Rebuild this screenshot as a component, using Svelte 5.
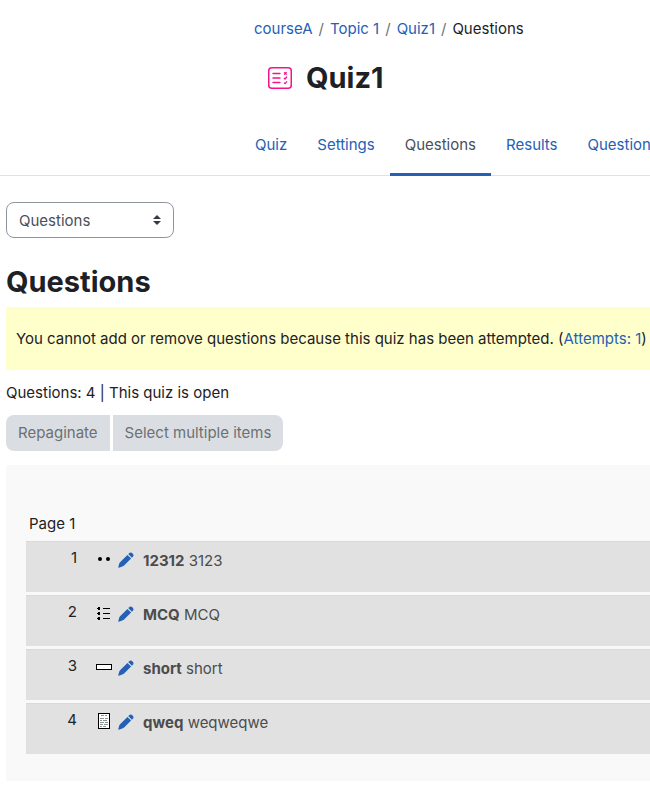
<script>
  const crumbs = ["courseA", "Topic 1", "Quiz1"];
  const tabs = ["Quiz", "Settings", "Questions", "Results", "Question bank"];
  const questions = [
    { type: "match", name: "12312", text: "3123" },
    { type: "multichoice", name: "MCQ", text: "MCQ" },
    { type: "shortanswer", name: "short", text: "short" },
    { type: "essay", name: "qweq", text: "weqweqwe" },
  ];

  let activeTab = $state("Questions");
  let view = $state("Questions");
</script>

<div class="page">
  <header class="header">
    <nav class="breadcrumb" aria-label="Breadcrumb">
      {#each crumbs as crumb}
        <a href="#top">{crumb}</a>
        <span class="breadcrumb__sep">/</span>
      {/each}
      <span>Questions</span>
    </nav>
    <div class="title">
      <svg class="title__icon" viewBox="0 0 24 24" fill="none" stroke="#f7118f" aria-hidden="true">
        <rect x="0.75" y="1.75" width="22.5" height="20.5" rx="3" stroke-width="1.5" />
        <path d="M5 7.5h7M5 12h7M5 16.5h7" stroke-width="1.4" stroke-linecap="round" />
        <path d="M16.2 6.2l2.4 2.4m0-2.4l-2.4 2.4M16 12l1 1 2-2.2M16 16.6l1 1 2-2.2" stroke-width="1.3" />
      </svg>
      <h1>Quiz1</h1>
    </div>
  </header>

  <nav class="tabs">
    {#each tabs as tab}
      <a
        href="#top"
        class="tabs__item"
        class:tabs__item--active={activeTab === tab}
        onclick={() => activeTab = tab}
      >{tab}</a>
    {/each}
  </nav>

  <main class="content">
    <select class="view-select" aria-label="Question bank navigation" bind:value={view}>
      <option>Questions</option>
      <option>Categories</option>
      <option>Import</option>
      <option>Export</option>
    </select>

    <h2>Questions</h2>
    <div class="notice">
      You cannot add or remove questions because this quiz has been attempted. (<a href="#top">Attempts: 1</a>)
    </div>
    <div class="status">Questions: {questions.length} | This quiz is open</div>

    <div class="actions">
      <button disabled>Repaginate</button>
      <button disabled>Select multiple items</button>
    </div>

    <section class="slots">
      <h3>Page 1</h3>
      <ol>
        {#each questions as q, i}
          <li class="slot">
            <span class="slot__number">{i + 1}</span>
            <svg class="slot__type" viewBox="0 0 16 16" aria-hidden="true">
              {#if q.type === "match"}
                <circle cx="4" cy="8" r="2" />
                <circle cx="12" cy="8" r="2" />
              {:else if q.type === "multichoice"}
                <path d="M2 2h2v3H2zM1 3h1v1H1zM2 7h2v3H2zM1 8h1v1H1zM2 12h2v3H2zM1 13h1v1H1zM7 3h7v1H7zM7 8h7v1H7zM7 13h7v1H7z" />
              {:else if q.type === "shortanswer"}
                <rect x="0.5" y="5.5" width="15" height="5" fill="#fff" stroke="#000" />
              {:else}
                <rect x="2.5" y="0.5" width="11" height="15" fill="#fff" stroke="#000" />
                <path
                  d="M5 2.5h3m1 0h2M4 5.5h4m1 0h3M4 7.5h2m1 0h4M4 9.5h4m1 0h3M4 11.5h3m1 0h4M4 13.5h2m1 0h3"
                  stroke="#899390"
                />
              {/if}
            </svg>
            <a href="#top" class="slot__link">
              <svg class="slot__edit" viewBox="0 0 16 16" fill="#2560b5" aria-hidden="true">
                <path d="M10.9 1.4a2.6 2.6 0 0 1 3.7 3.7l-.7.7-3.7-3.7z" />
                <path d="M9.4 2.9l3.7 3.7-7 7c-.5.5-1.1.8-1.8 1L.9 15.7c-.4.1-.7-.2-.6-.6l.9-3.3c.2-.7.6-1.4 1.1-1.9z" />
              </svg>
              <span><strong>{q.name}</strong> {q.text}</span>
            </a>
          </li>
        {/each}
      </ol>
    </section>
  </main>
</div>

<style>
  :global(body) {
    margin: 0;
    background: #fff;
  }
  .page {
    overflow: hidden;
    padding-bottom: 20px;
    color: #1d2125;
    font: 15px/24px Inter, "Liberation Sans", sans-serif;
  }
  a { color: #2560b5; text-decoration: none; }
  h1, h2, h3 { margin: 0; }

  .header { padding: 17px 0 0 254px; }
  .breadcrumb { display: flex; gap: 6px; white-space: nowrap; }
  .breadcrumb__sep { color: #6a737b; }
  .title { display: flex; align-items: center; gap: 14px; padding: 19px 0 0 14px; }
  .title__icon { width: 24px; height: 24px; }
  h1 { font-size: 29px; line-height: 36px; font-weight: 700; }

  .tabs {
    display: flex;
    height: 62px;
    margin-top: 17px;
    padding-left: 240px;
    border-bottom: 1px solid #dee2e6;
  }
  .tabs__item {
    box-sizing: border-box;
    height: 63px;
    padding: 20px 15px 0;
    border-bottom: 3px solid transparent;
    white-space: nowrap;
  }
  .tabs__item--active { color: #495057; border-bottom-color: #2560b5; }

  .content { padding: 26px 0 0 6px; }
  .view-select {
    display: block;
    width: 168px;
    height: 36px;
    padding: 2px 28px 0 12px;
    border: 1px solid #8f959e;
    border-radius: 8px;
    appearance: none;
    color: #495057;
    font: inherit;
    background: #fff url("data:image/svg+xml,%3csvg xmlns='http://www.w3.org/2000/svg' viewBox='0 0 4 5'%3e%3cpath fill='%23343a40' d='M2 0L0 2h4zm0 5L0 3h4z'/%3e%3c/svg%3e") no-repeat right 12px center / 8px 10px;
  }
  h2 { margin-top: 26px; font-size: 29px; line-height: 36px; font-weight: 700; }
  .notice { margin-top: 7px; padding: 20px 0 19px 10px; background: #ffffcc; }
  .status { margin-top: 11px; }

  .actions { display: flex; gap: 3px; margin-top: 10px; }
  .actions button {
    height: 36px;
    padding: 0 12px;
    border: 0;
    background: #dadee2;
    color: #6c7074;
    font: inherit;
  }
  .actions button:first-child { border-radius: 8px 0 0 8px; }
  .actions button:last-child { border-radius: 0 8px 8px 0; }

  .slots { margin-top: 14px; padding: 47px 0 27px 20px; background: #f9f9f9; }
  h3 { padding: 0 3px 5px; font-size: 15px; line-height: 24px; font-weight: 400; }
  ol {
    display: flex;
    flex-direction: column;
    gap: 3px;
    margin: 0;
    padding: 0;
    list-style: none;
  }
  .slot {
    display: flex;
    box-sizing: border-box;
    min-height: 51px;
    padding-top: 4px;
    border-top: 1px solid #d5dae0;
    background: #e1e1e1;
  }
  .slot__number { width: 51px; text-align: right; }
  .slot__type { width: 16px; height: 16px; margin: 5px 6px 0 19px; }
  .slot__link { display: flex; gap: 9px; padding-top: 3px; color: #4c4c4c; }
  .slot__edit { width: 16px; height: 16px; margin-top: 3px; }
  strong { font-weight: 700; }
</style>
